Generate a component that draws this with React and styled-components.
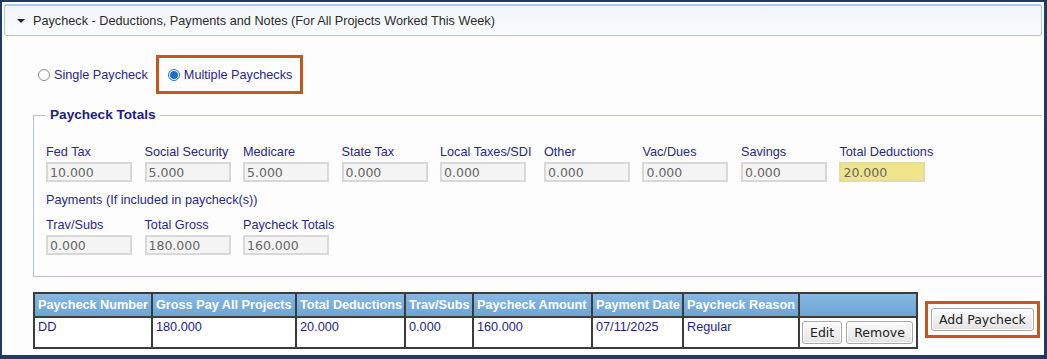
import React from 'react';
import styled, { createGlobalStyle } from 'styled-components';

const GlobalStyle = createGlobalStyle`
  html, body {
    margin: 0;
    padding: 0;
    background: #ffffff;
  }
  body {
    font-family: "Liberation Sans", Arial, sans-serif;
  }
`;

const Frame = styled.div`
  width: 1047px;
  height: 359px;
  box-sizing: border-box;
  border-style: solid;
  border-color: #1f3b63;
  border-width: 2px 3px 4px 2px;
  background: #fdfdfd;
  overflow: hidden;
`;

const SectionHeader = styled.div`
  display: flex;
  align-items: center;
  gap: 8px;
  height: 32px;
  box-sizing: border-box;
  margin: 2px 2px 0 2px;
  padding-left: 12px;
  border: 1px solid #a6c8ee;
  border-top: 2px solid #a6c8ee;
  border-radius: 3px;
  background: linear-gradient(#f1f4f8, #fbfcfe);
  color: #2b2b2b;
  font-size: 12.7px;
`;

const Caret = styled.span`
  width: 0;
  height: 0;
  border-left: 4px solid transparent;
  border-right: 4px solid transparent;
  border-top: 4px solid #222;
`;

const Body = styled.div`
  padding: 19px 2px 0 31px;
`;

const RadioRow = styled.div`
  display: flex;
  align-items: center;
  height: 39px;
  margin-left: 5px;
`;

const RadioOption = styled.label`
  display: flex;
  align-items: center;
  gap: 4px;
  box-sizing: border-box;
  color: #28288c;
  font-size: 12.7px;
  white-space: nowrap;
  ${(p) =>
    p.$highlight &&
    `
    height: 39px;
    margin-left: 8px;
    padding: 0 8px 0 9px;
    border: 3px solid #c4581a;
  `}
`;

const RadioDot = styled.span`
  width: 12px;
  height: 12px;
  box-sizing: border-box;
  border-radius: 50%;
  border: 1px solid ${(p) => (p.$checked ? '#1a6fd8' : '#8a8a8a')};
  background: ${(p) =>
    p.$checked
      ? 'radial-gradient(circle, #1a6fd8 0 3.6px, #ffffff 4.2px)'
      : '#ffffff'};
  ${(p) => p.$checked && 'border-width: 1.5px;'}
`;

const Totals = styled.fieldset`
  margin: 12px 0 0 0;
  padding: 20px 0 21px 12px;
  border: 1px solid #b6c0da;
  border-right: none;
  min-width: 0;
`;

const Legend = styled.legend`
  padding: 0 4px;
  line-height: 18px;
  font-size: 13.6px;
  font-weight: bold;
  color: #1c1c86;
`;

const FieldRow = styled.div`
  display: flex;
  column-gap: 12.5px;
  margin-top: ${(p) => p.$top || 0}px;
`;

const Field = styled.div`
  display: flex;
  flex-direction: column;
  min-width: 86px;
`;

const FieldLabel = styled.span`
  line-height: 16px;
  margin-bottom: 2px;
  color: #28288c;
  font-size: 12.7px;
  white-space: nowrap;
`;

const ValueBox = styled.input`
  width: 86px;
  height: 20px;
  box-sizing: border-box;
  margin: 0;
  padding: 0 2px;
  border: 2px solid ${(p) => (p.$total ? '#e2dba2' : '#d8d8d8')};
  background: ${(p) => (p.$total ? '#efe48a' : '#f4f4f4')};
  color: #666666;
  font-family: "DejaVu Sans", Verdana, sans-serif;
  font-size: 12.5px;
  outline: none;
`;

const Note = styled.div`
  margin-top: 10px;
  line-height: 16px;
  color: #28288c;
  font-size: 12.7px;
`;

const ListRow = styled.div`
  display: flex;
  align-items: flex-start;
  gap: 7px;
  margin-top: 15px;
`;

const Grid = styled.table`
  table-layout: fixed;
  width: 883px;
  border-collapse: collapse;
  border: 2px solid #555555;
  font-size: 12.7px;
`;

const HeadCell = styled.th`
  height: 22px;
  padding: 0 3px;
  border: 2px solid #3c3c3c;
  background: linear-gradient(#86b8e2, #6ea4d4);
  color: #ffffff;
  font-weight: bold;
  text-align: left;
  white-space: nowrap;
  overflow: hidden;
`;

const Cell = styled.td`
  height: 26px;
  padding: ${(p) => (p.$actions ? '3px 2px 0' : '2px 3px 0')};
  border: 2px solid #3c3c3c;
  background: #ffffff;
  color: #1e1e8c;
  vertical-align: top;
  white-space: nowrap;
`;

const Actions = styled.div`
  display: flex;
  gap: 4px;
`;

const Button = styled.button`
  height: 23px;
  box-sizing: border-box;
  margin: 0;
  padding: 0 7px;
  border: 1px solid #a8a8a8;
  border-radius: 3px;
  background: linear-gradient(#fbfbfb, #e3e3e3);
  box-shadow: inset 0 0 0 1px #ffffff;
  color: #222222;
  font-family: "DejaVu Sans", Verdana, sans-serif;
  font-size: 12.5px;
  cursor: pointer;
`;

const AddBox = styled.div`
  margin-top: 9px;
  padding: 4px 3px;
  border: 3px solid #c4581a;
`;

const deductions = [
  ['Fed Tax', '10.000'],
  ['Social Security', '5.000'],
  ['Medicare', '5.000'],
  ['State Tax', '0.000'],
  ['Local Taxes/SDI', '0.000'],
  ['Other', '0.000'],
  ['Vac/Dues', '0.000'],
  ['Savings', '0.000'],
  ['Total Deductions', '20.000', true],
];

const payments = [
  ['Trav/Subs', '0.000'],
  ['Total Gross', '180.000'],
  ['Paycheck Totals', '160.000'],
];

const columns = [
  ['Paycheck Number', 118],
  ['Gross Pay All Projects', 144],
  ['Total Deductions', 109],
  ['Trav/Subs', 68],
  ['Paycheck Amount', 119],
  ['Payment Date', 91],
  ['Paycheck Reason', 116],
  ['', 118],
];

const paychecks = [
  ['DD', '180.000', '20.000', '0.000', '160.000', '07/11/2025', 'Regular'],
];

const FieldGroup = ({ items, top }) => (
  <FieldRow $top={top}>
    {items.map(([label, value, total]) => (
      <Field key={label}>
        <FieldLabel>{label}</FieldLabel>
        <ValueBox readOnly value={value} $total={total} />
      </Field>
    ))}
  </FieldRow>
);

export default function App() {
  return (
    <>
      <GlobalStyle />
      <Frame>
        <SectionHeader>
          <Caret />
          <span>Paycheck - Deductions, Payments and Notes (For All Projects Worked This Week)</span>
        </SectionHeader>

        <Body>
          <RadioRow>
            <RadioOption>
              <RadioDot />
              Single Paycheck
            </RadioOption>
            <RadioOption $highlight>
              <RadioDot $checked />
              Multiple Paychecks
            </RadioOption>
          </RadioRow>

          <Totals>
            <Legend>Paycheck Totals</Legend>
            <FieldGroup items={deductions} />
            <Note>Payments (If included in paycheck(s))</Note>
            <FieldGroup items={payments} top={9} />
          </Totals>

          <ListRow>
            <Grid>
              <colgroup>
                {columns.map(([name, w], i) => (
                  <col key={i} style={{ width: w }} />
                ))}
              </colgroup>
              <thead>
                <tr>
                  {columns.map(([name], i) => (
                    <HeadCell key={i}>{name}</HeadCell>
                  ))}
                </tr>
              </thead>
              <tbody>
                {paychecks.map((row) => (
                  <tr key={row[0]}>
                    {row.map((v, i) => (
                      <Cell key={i}>{v}</Cell>
                    ))}
                    <Cell $actions>
                      <Actions>
                        <Button>Edit</Button>
                        <Button>Remove</Button>
                      </Actions>
                    </Cell>
                  </tr>
                ))}
              </tbody>
            </Grid>
            <AddBox>
              <Button>Add Paycheck</Button>
            </AddBox>
          </ListRow>
        </Body>
      </Frame>
    </>
  );
}
